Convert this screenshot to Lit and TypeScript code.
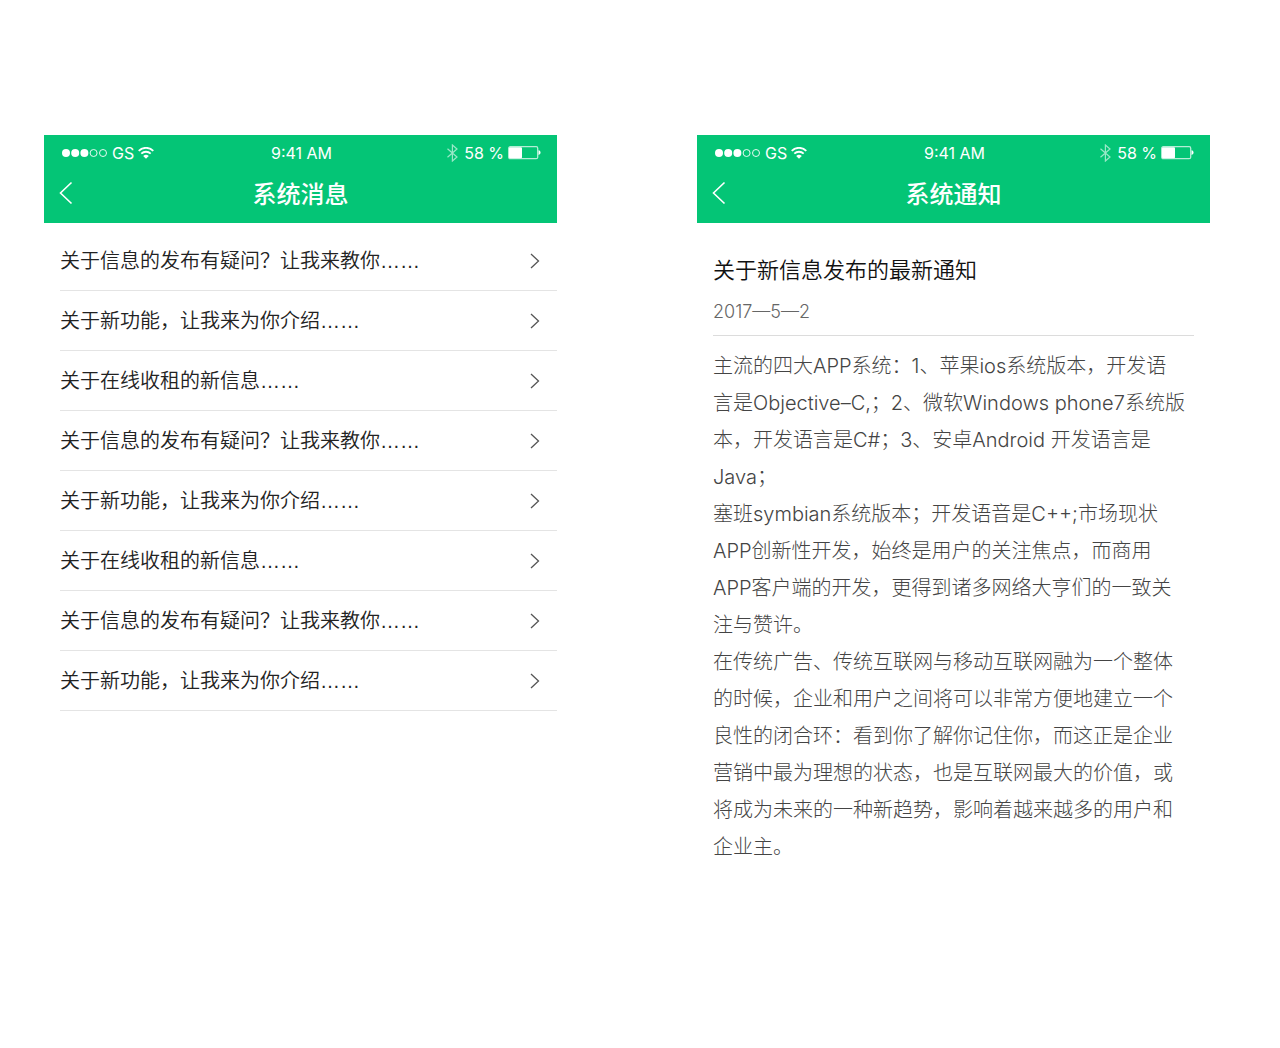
import { LitElement, html, css } from "lit";
import { customElement, property } from "lit/decorators.js";

@customElement("phone-header")
class PhoneHeader extends LitElement {
  @property() heading = "";

  static styles = css`
    :host {
      display: block;
      background: #04c576;
      color: #fff;
      font-family: Inter, "Noto Sans CJK SC", sans-serif;
    }
    .status {
      display: grid;
      grid-template-columns: 1fr auto 1fr;
      align-items: center;
      height: 36px;
      padding: 0 16px 0 18px;
      font: 400 16px/20px Inter, Roboto, sans-serif;
    }
    .group {
      display: flex;
      align-items: center;
      gap: 4px;
    }
    .end {
      justify-content: flex-end;
    }
    .bluetooth {
      margin-right: 2px;
    }
    svg {
      display: block;
      flex: none;
    }
    .bar {
      display: grid;
      grid-template-columns: 44px 1fr 44px;
      align-items: center;
      height: 44px;
      padding-bottom: 8px;
    }
    .back {
      display: flex;
      align-items: center;
      justify-content: center;
      height: 44px;
      padding: 0;
      border: 0;
      background: none;
      color: inherit;
      cursor: pointer;
    }
    h1 {
      margin: 0;
      text-align: center;
      font: 500 24px/36px "Noto Sans CJK SC", sans-serif;
    }
  `;

  render() {
    return html`
      <div class="status">
        <div class="group">
          <svg width="46" height="10" viewBox="0 0 46 10" fill="#fff">
            <circle cx="4" cy="5" r="4" />
            <circle cx="13.2" cy="5" r="4" />
            <circle cx="22.4" cy="5" r="4" />
            <g fill="none" stroke="#fff" stroke-width="0.9">
              <circle cx="31.6" cy="5" r="3.5" />
              <circle cx="41" cy="5" r="3.5" />
            </g>
          </svg>
          <span>GS</span>
          <svg width="16" height="12" viewBox="0 0 16 12" fill="none" stroke="#fff" stroke-width="1.8">
            <path d="M.7 3.8a10.4 10.4 0 0 1 14.6 0" />
            <path d="M3.3 6.7a6.7 6.7 0 0 1 9.4 0" />
            <path d="M8 11.8 5.2 9a4 4 0 0 1 5.6 0z" fill="#fff" stroke="none" />
          </svg>
        </div>
        <span>9:41 AM</span>
        <div class="group end">
          <svg class="bluetooth" width="11" height="18" viewBox="0 0 11 18" fill="none" stroke="#fff" stroke-opacity="0.6" stroke-width="1.2">
            <path d="M.5 4.8 10 13l-4.6 4V1L10 5 .5 13.2" />
          </svg>
          <span>58 %</span>
          <svg width="33" height="14" viewBox="0 0 33 14" fill="none">
            <rect x="0.7" y="0.7" width="29" height="12" rx="1.5" stroke="#fff" stroke-opacity="0.7" stroke-width="1.3" />
            <rect x="1" y="1.2" width="13" height="11" rx="1" fill="#fff" />
            <path d="M30.5 4.3c1.3.2 2 1 2 2.3s-.7 2.1-2 2.3z" fill="#fff" />
          </svg>
        </div>
      </div>
      <div class="bar">
        <button class="back" aria-label="返回">
          <svg width="14" height="24" viewBox="0 0 14 24" fill="none" stroke="#fff" stroke-width="1.6">
            <path d="M12.5 1.5 1.5 12l11 10.5" />
          </svg>
        </button>
        <h1>${this.heading}</h1>
      </div>
    `;
  }
}

const messages = [
  "关于信息的发布有疑问？让我来教你……",
  "关于新功能，让我来为你介绍……",
  "关于在线收租的新信息……",
  "关于信息的发布有疑问？让我来教你……",
  "关于新功能，让我来为你介绍……",
  "关于在线收租的新信息……",
  "关于信息的发布有疑问？让我来教你……",
  "关于新功能，让我来为你介绍……",
];

const paragraphs = [
  [
    "主流的四大APP系统：1、苹果ios系统版本，开发语",
    "言是Objective–C,；2、微软Windows phone7系统版",
    "本，开发语言是C#；3、安卓Android 开发语言是",
    "Java；",
  ],
  [
    "塞班symbian系统版本；开发语音是C++;市场现状",
    "APP创新性开发，始终是用户的关注焦点，而商用",
    "APP客户端的开发，更得到诸多网络大亨们的一致关",
    "注与赞许。",
  ],
  [
    "在传统广告、传统互联网与移动互联网融为一个整体",
    "的时候，企业和用户之间将可以非常方便地建立一个",
    "良性的闭合环：看到你了解你记住你，而这正是企业",
    "营销中最为理想的状态，也是互联网最大的价值，或",
    "将成为未来的一种新趋势，影响着越来越多的用户和",
    "企业主。",
  ],
];

@customElement("app-root")
class AppRoot extends LitElement {
  static styles = css`
    :host {
      display: block;
      min-height: 100vh;
      background: #fff;
    }
    .screens {
      display: grid;
      grid-template-columns: 1fr 1fr;
      gap: 140px;
      align-items: start;
      padding: 135px 70px 135px 44px;
    }
    ul {
      margin: 0;
      padding: 8px 0 0 16px;
      list-style: none;
    }
    .row {
      display: flex;
      align-items: center;
      justify-content: space-between;
      height: 59px;
      padding-right: 16px;
      border-bottom: 1px solid #e4e4e4;
      color: #222;
      text-decoration: none;
      font: 350 20px/30px "Liberation Sans", "Noto Sans CJK SC", sans-serif;
    }
    .row svg {
      display: block;
      flex: none;
    }
    article {
      padding: 27px 16px 0;
    }
    h2 {
      margin: 0;
      color: #111;
      font: 350 22px/36px "Noto Sans CJK SC", sans-serif;
    }
    .date {
      display: block;
      padding: 12px 0 9px;
      border-bottom: 1px solid #dcdcdc;
      margin-bottom: 12px;
      color: #666;
      font: 300 18px/28px Inter, "Noto Sans CJK SC", sans-serif;
    }
    p {
      margin: 0;
      white-space: nowrap;
      color: #444;
      font: 300 20px/37px Inter, "Noto Sans CJK SC", sans-serif;
    }
    .line {
      display: block;
    }
  `;

  render() {
    return html`
      <main class="screens" lang="zh-CN">
        <section>
          <phone-header heading="系统消息"></phone-header>
          <ul>
            ${messages.map(
              (text) => html`<li>
                <a class="row" href="#">
                  <span>${text}</span>
                  <svg width="12" height="16" viewBox="0 0 12 16" fill="none" stroke="#555" stroke-width="1.3">
                    <path d="M2 1l7.5 7L2 15" />
                  </svg>
                </a>
              </li>`
            )}
          </ul>
        </section>
        <section>
          <phone-header heading="系统通知"></phone-header>
          <article>
            <h2>关于新信息发布的最新通知</h2>
            <time class="date" datetime="2017-05-02">2017—5—2</time>
            ${paragraphs.map(
              (lines) => html`<p>${lines.map((line) => html`<span class="line">${line}</span>`)}</p>`
            )}
          </article>
        </section>
      </main>
    `;
  }
}
